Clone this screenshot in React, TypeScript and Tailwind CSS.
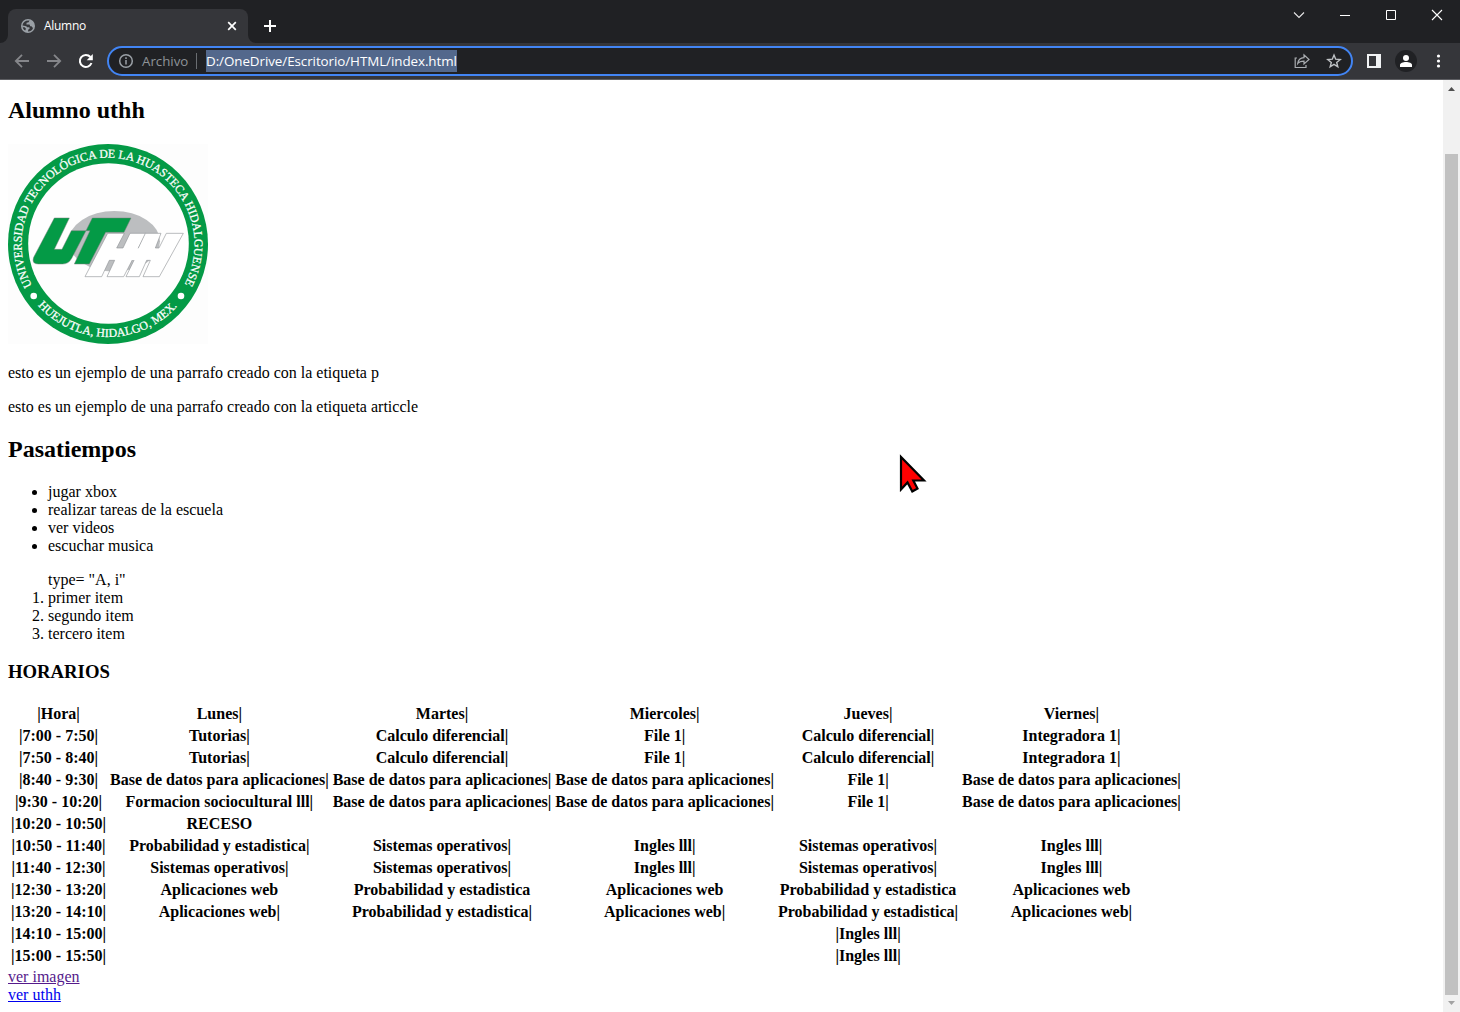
import React from "react";

const rows: string[][] = [
  ["|Hora|", "Lunes|", "Martes|", "Miercoles|", "Jueves|", "Viernes|"],
  ["|7:00 - 7:50|", "Tutorias|", "Calculo diferencial|", "File 1|", "Calculo diferencial|", "Integradora 1|"],
  ["|7:50 - 8:40|", "Tutorias|", "Calculo diferencial|", "File 1|", "Calculo diferencial|", "Integradora 1|"],
  ["|8:40 - 9:30|", "Base de datos para aplicaciones|", "Base de datos para aplicaciones|", "Base de datos para aplicaciones|", "File 1|", "Base de datos para aplicaciones|"],
  ["|9:30 - 10:20|", "Formacion sociocultural lll|", "Base de datos para aplicaciones|", "Base de datos para aplicaciones|", "File 1|", "Base de datos para aplicaciones|"],
  ["|10:20 - 10:50|", "RECESO", "", "", "", ""],
  ["|10:50 - 11:40|", "Probabilidad y estadistica|", "Sistemas operativos|", "Ingles lll|", "Sistemas operativos|", "Ingles lll|"],
  ["|11:40 - 12:30|", "Sistemas operativos|", "Sistemas operativos|", "Ingles lll|", "Sistemas operativos|", "Ingles lll|"],
  ["|12:30 - 13:20|", "Aplicaciones web", "Probabilidad y estadistica", "Aplicaciones web", "Probabilidad y estadistica", "Aplicaciones web"],
  ["|13:20 - 14:10|", "Aplicaciones web|", "Probabilidad y estadistica|", "Aplicaciones web|", "Probabilidad y estadistica|", "Aplicaciones web|"],
  ["|14:10 - 15:00|", "", "", "", "|Ingles lll|", ""],
  ["|15:00 - 15:50|", "", "", "", "|Ingles lll|", ""],
];

function Logo() {
  return (
    <svg width="200" height="200" viewBox="0 0 200 200" className="block bg-[#fdfdfd]">
      <defs>
        <path id="top" d="M24 141.5A86.5 86.5 0 1 1 176 141.5" />
        <path id="bottom" d="M30 161.5A93.5 93.5 0 0 0 170 161.5" />
      </defs>
      <circle cx="100" cy="100" r="100" fill="#049a46" />
      <circle cx="100.5" cy="99.5" r="80.3" fill="#fefefe" />
      <circle cx="25.7" cy="152" r="3.3" fill="#fff" />
      <circle cx="173" cy="152" r="3.3" fill="#fff" />
      <g fill="#fff" stroke="#fff" strokeWidth=".25" fontFamily="Liberation Serif, serif" fontSize="12">
        <text textLength="356" lengthAdjust="spacingAndGlyphs"><textPath href="#top">UNIVERSIDAD TECNOLÓGICA DE LA HUASTECA HIDALGUENSE</textPath></text>
        <text textLength="157" lengthAdjust="spacingAndGlyphs"><textPath href="#bottom">HUEJUTLA, HIDALGO, MEX.</textPath></text>
      </g>
      <g transform="translate(12 51) scale(.33333)">
        <ellipse cx="283" cy="139" rx="137" ry="91" fill="#bcbec0" />
        <g stroke="#77807b" strokeWidth="1.5">
          <path fill="#049a46" d="M103 69H148L103 163H126L154 107H198L155 190Q146 207 128 207H55Q34 207 41 187Z" />
          <path fill="#049a46" d="M217 69H333L312 112H257L208 207H163L210 107H198Z" />
        </g>
        <g transform="translate(210 93)" fill="#fff" stroke="#8d9093" strokeWidth="1.8">
          <path d="M53 22H103L80 66H99L120 22H168L101 152H51L74 103H58L35 152H-15Z" />
          <path d="M166 22H213L196 66H207L229 22H280L208 152H159L181 103H170L148 152H108L132 103L145 66Z" />
          <path d="M134 67H158L142 102H118Z" stroke="none" />
        </g>
      </g>
    </svg>
  );
}

function Chrome() {
  return (
    <header className="h-20 bg-[#35363a] border-b border-[#5d5e62] font-['Open_Sans',sans-serif]">
      <div className="h-[43px] bg-[#202124] flex items-start">
        <div className="relative ml-2 mt-[9px] h-[34px] w-60 rounded-t-lg bg-[#35363a] flex items-center text-white">
          <svg className="absolute -left-2 bottom-0" width="8" height="8"><path d="M8 0V8H0A8 8 0 0 0 8 0" fill="#35363a" /></svg>
          <svg className="absolute -right-2 bottom-0" width="8" height="8"><path d="M0 0V8H8A8 8 0 0 1 0 0" fill="#35363a" /></svg>
          <svg className="ml-3" width="16" height="16" viewBox="0 0 16 16">
            <circle cx="8" cy="8" r="7" fill="#9aa0a6" />
            <path fill="#35363a" d="M9.5 2.5 8.6 4.2 6.6 4.8 6.4 6.5H9.6L10.2 8.3H11.5L12.6 9.7 13.2 9.4C12.6 12 10.6 13.4 8 13.5L8.2 11.8 9.7 10.6 9.3 9.3H7.2L6.3 8.2 2.6 7.4C2.3 9.5 3.5 11.4 5.2 12.5L6 10.8 4.6 9.3 2.5 8.9C2.2 6 3.8 3.6 6.2 2.8Z" fillRule="evenodd" />
          </svg>
          <span className="ml-2 text-[12px] leading-4 font-medium tracking-[-0.3px]">Alumno</span>
          <svg className="ml-auto mr-[11px]" width="10" height="10" viewBox="0 0 10 10"><path d="M1.2 1.2l7.6 7.6M8.8 1.2l-7.6 7.6" stroke="#fff" strokeWidth="1.7" /></svg>
        </div>
        <svg className="ml-4 mt-5" width="12" height="12"><path d="M6 0V12M0 6H12" stroke="#fff" strokeWidth="2" /></svg>
        <div className="ml-auto flex h-[30px] items-center text-white">
          <svg className="mr-[34px]" width="12" height="10" viewBox="0 0 12 10" fill="none" stroke="#e8e8e8" strokeWidth="1.1"><path d="M1 2.5l5 5 5-5" /></svg>
          <svg width="12" height="12" className="mr-[34px]"><path d="M1 6.5H11" stroke="#fff" /></svg>
          <svg width="12" height="12" className="mr-[34px]"><path d="M1.5 1.5h9v9h-9z" fill="none" stroke="#fff" /></svg>
          <svg width="12" height="12" className="mr-[17px]"><path d="M1 1l10 10M11 1L1 11" stroke="#fff" strokeWidth="1.1" /></svg>
        </div>
      </div>
      <div className="flex h-9 items-center">
        <svg className="ml-[14px]" width="16" height="16" fill="none" stroke="#85868a" strokeWidth="1.8"><path d="M15 8H2M8 1.8L1.8 8 8 14.2" /></svg>
        <svg className="ml-4" width="16" height="16" fill="none" stroke="#85868a" strokeWidth="1.8"><path d="M1 8H14M8 1.8L14.2 8 8 14.2" /></svg>
        <svg className="ml-4" width="16" height="16" fill="none" stroke="#fff" strokeWidth="2"><path d="M13.5 10A6 6 0 1 1 12.4 4" /><path d="M14.8 1v6.3H8.7z" fill="#fff" stroke="none" /></svg>
        <div className="ml-[13px] flex h-[30px] w-[1246px] items-center rounded-full border-2 border-[#4285f4] bg-[#202124] leading-[22px] whitespace-nowrap">
          <svg className="ml-[9px]" width="16" height="16" fill="none" stroke="#9aa0a6" strokeWidth="1.5"><circle cx="8" cy="8" r="6.3" /><path d="M8 7v4.6M8 4.3v1.6" /></svg>
          <span className="ml-2 w-[47px] text-[13.3px] text-[#8e9398]">Archivo</span>
          <span className="ml-[7px] h-4 w-px bg-[#6a6d71]" />
          <span className="ml-[9px] h-[22px] w-[251px] bg-[#53688c] text-[13.4px] tracking-[-0.07px] text-white">D:/OneDrive/Escritorio/HTML/index.html</span>
          <svg className="ml-auto" width="16" height="16" fill="none" stroke="#aaadb1" strokeWidth="1.2"><path d="M3 5H1.2v9.5H12V12M3.7 10.5C4.2 6.6 6.5 4.7 10 4.6V1.8L15 6.5 10 11V8.2C7 8.2 5 8.8 3.7 10.5Z" /></svg>
          <svg className="ml-4 mr-[9px]" width="16" height="16" viewBox="0 0 16 16" fill="none" stroke="#bfc2c5" strokeWidth="1.4"><path d="M8 2l1.7 4.2 4.5.3-3.5 2.9 1.1 4.4L8 11.4l-3.8 2.4 1.1-4.4-3.5-2.9 4.5-.3z" /></svg>
        </div>
        <svg className="ml-[14px]" width="14" height="14"><path d="M0 0H14V14H0ZM2 2V12H9V2Z" fill="#f1f3f4" fillRule="evenodd" /></svg>
        <div className="ml-[14px] flex size-[22px] items-center justify-center rounded-full bg-[#202124]"><svg width="12" height="12"><circle cx="6" cy="3" r="3" fill="#fff" /><path d="M0 12v-2c0-2 3-3 6-3s6 1 6 3v2z" fill="#fff" /></svg></div>
        <svg className="ml-[19px]" width="5" height="14" fill="#fff"><circle cx="2.5" cy="2" r="1.6" /><circle cx="2.5" cy="7" r="1.6" /><circle cx="2.5" cy="12" r="1.6" /></svg>
      </div>
    </header>
  );
}

export default function App() {
  return (
    <div className="relative flex h-[1012px] w-[1460px] flex-col overflow-hidden bg-white">
      <Chrome />
      <div className="flex min-h-0 flex-1">
        <main className="flex-1 overflow-hidden pl-2 font-['Liberation_Serif',serif] text-[16px] leading-[18px] text-black">
          <h2 className="mt-[17px] text-[24px] leading-[27px] font-bold">Alumno uthh</h2>
          <div className="mt-5"><Logo /></div>
          <p className="mt-5">esto es un ejemplo de una parrafo creado con la etiqueta p</p>
          <article className="mt-4">esto es un ejemplo de una parrafo creado con la etiqueta articcle</article>
          <h2 className="mt-5 text-[24px] leading-[27px] font-bold">Pasatiempos</h2>
          <ul className="mt-5 list-disc pl-10">
            <li>jugar xbox</li>
            <li>realizar tareas de la escuela</li>
            <li>ver videos</li>
            <li>escuchar musica</li>
          </ul>
          <ol className="mt-4 list-decimal pl-10">
            type= "A, i"
            <li>primer item</li>
            <li>segundo item</li>
            <li>tercero item</li>
          </ol>
          <h3 className="mt-[18px] text-[18.72px] leading-[22px] font-bold">HORARIOS</h3>
          <table className="mt-[19px] border-separate border-spacing-[2px] font-bold">
            <tbody>
              {rows.map((r, i) => (
                <tr key={i}>
                  {r.map((c, j) => (
                    <th key={j} className="h-5 p-px text-center whitespace-nowrap">{c}</th>
                  ))}
                </tr>
              ))}
            </tbody>
          </table>
          <div><a className="text-[#551a8b] underline">ver imagen</a></div>
          <div><a className="text-[#0000ee] underline">ver uthh</a></div>
        </main>
        <aside className="flex w-[17px] flex-col items-center bg-[#f1f1f1]">
          <svg width="17" height="17"><path d="M5 11h7L8.5 7z" fill="#505050" /></svg>
          <div className="mt-[57px] h-[841px] w-[13px] bg-[#c1c1c1]" />
          <svg width="17" height="17"><path d="M5 6h7l-3.5 4z" fill="#a3a3a3" /></svg>
        </aside>
      </div>
      <svg className="absolute top-[453px] left-[898px]" width="30" height="42" viewBox="0 0 30 42">
        <path d="M3 4V36.5l6.5-7 4.8 9 5.2-3-4.2-8H26z" fill="#f00" stroke="#000" strokeWidth="2.2" />
      </svg>
    </div>
  );
}
